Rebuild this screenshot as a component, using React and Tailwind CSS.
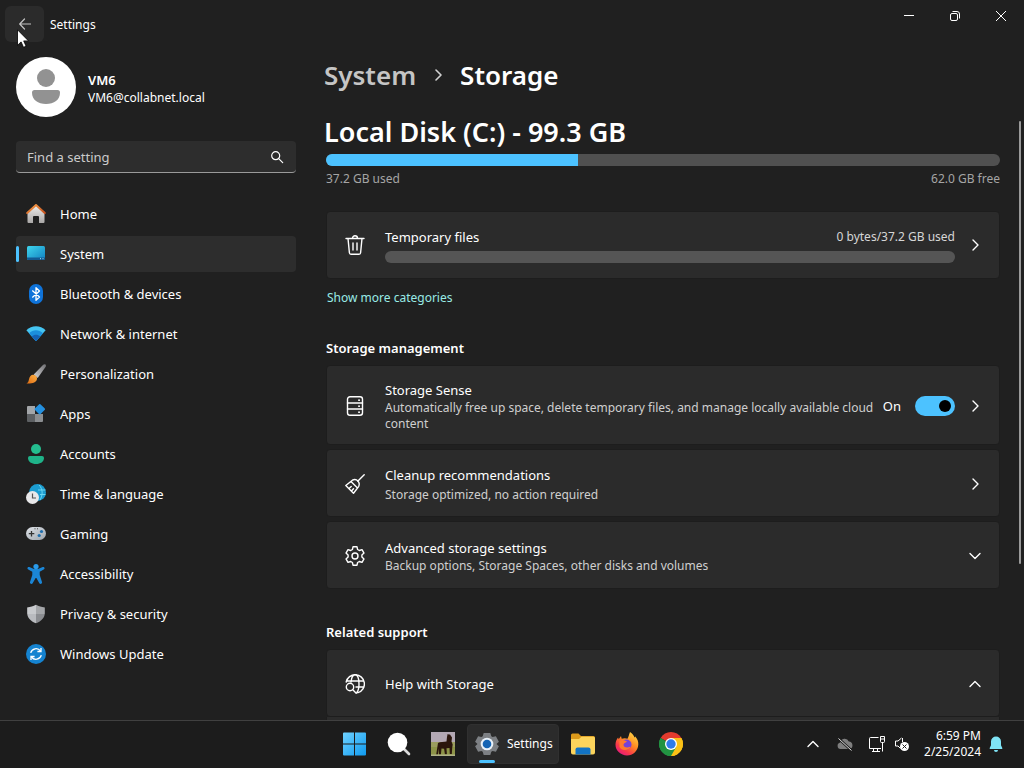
import { useState } from "react"
import clsx from "clsx"

const HomeIcon = () => (
  <svg viewBox="0 0 20 20" className="size-5">
    <defs>
      <linearGradient id="homeWall" x1="0" y1="0" x2="0" y2="1">
        <stop offset="0" stopColor="#f1efee" />
        <stop offset="1" stopColor="#a9a7a6" />
      </linearGradient>
      <linearGradient id="homeRoof" x1="0" y1="0" x2="1" y2="1">
        <stop offset="0" stopColor="#f7a04a" />
        <stop offset="1" stopColor="#c8501c" />
      </linearGradient>
    </defs>
    <path d="M1.500 8 10 .8 18.500 8v10a1 1 0 0 1-1 1H13v-6a1 1 0 0 0-1-1H8a1 1 0 0 0-1 1v6H2.500a1 1 0 0 1-1-1z" fill="url(#homeWall)" />
    <path d="M1.200 9 10 1l8.800 8" fill="none" stroke="url(#homeRoof)" strokeWidth="2" strokeLinecap="round" strokeLinejoin="round" />
  </svg>
)

const SystemIcon = () => (
  <svg viewBox="0 0 20 20" className="size-5">
    <defs>
      <linearGradient id="screen" x1="0" y1="0" x2="1" y2="1">
        <stop offset="0" stopColor="#3fd6ee" />
        <stop offset="1" stopColor="#1180c0" />
      </linearGradient>
    </defs>
    <rect x="1" y="2" width="18" height="14" rx="1.500" fill="url(#screen)" />
    <path d="M1 13.500h18v1a1.500 1.500 0 0 1-1.500 1.500h-15A1.500 1.500 0 0 1 1 14.500z" fill="#125a93" />
    <path d="M14 14.700h1M16.500 14.700h1" stroke="#9fe2f7" strokeWidth="1" />
  </svg>
)

const BluetoothIcon = () => (
  <svg viewBox="0 0 20 20" className="size-5">
    <rect x="3" y="0" width="14" height="20" rx="7" fill="#0f73d9" />
    <path d="m6.300 6.500 7.200 6.600L10 16.300V3.700l3.500 3.200-7.200 6.600" fill="none" stroke="#fff" strokeWidth="1.300" strokeLinejoin="round" />
  </svg>
)

const NetworkIcon = () => (
  <svg viewBox="0 0 20 20" className="size-5">
    <path d="M.4 6.200C5.500.800 14.500.800 19.600 6.200L10.700 16.400a1 1 0 0 1-1.400 0z" fill="#45c5f2" />
    <path d="M3 9.300c3.900-4 10.100-4 14 0l-6.300 7.100a1 1 0 0 1-1.400 0z" fill="#1b8fdc" />
    <path d="M5.800 12.500c2.400-2.300 6-2.300 8.400 0l-3.500 3.900a1 1 0 0 1-1.400 0z" fill="#1462b5" />
  </svg>
)

const BrushIcon = () => (
  <svg viewBox="0 0 20 20" className="size-5">
    <defs>
      <linearGradient id="handle" x1="1" y1="0" x2="0" y2="1">
        <stop offset="0" stopColor="#6d6d70" />
        <stop offset="1" stopColor="#d5d5d8" />
      </linearGradient>
      <linearGradient id="bristle" x1="1" y1="0" x2="0" y2="1">
        <stop offset="0" stopColor="#ffb347" />
        <stop offset="1" stopColor="#dd6a12" />
      </linearGradient>
    </defs>
    <path d="M19.500.6c.7.700.5 1.700 0 2.500l-7.800 11-4-3.600L17.200.8c.7-.6 1.700-.8 2.300-.2z" fill="url(#handle)" />
    <path d="M7.300 10.800c2.600.3 4 2.200 3.700 4.200-.4 3.300-4.700 4.800-10.600 4.500 1.900-1 2.200-2.500 2.600-4.300.5-2.600 2.200-4.600 4.300-4.400z" fill="url(#bristle)" />
  </svg>
)

const AppsIcon = () => (
  <svg viewBox="0 0 20 20" className="size-5">
    <path d="M1 3a1 1 0 0 1 1-1h7v8H1z" fill="#a3a6a9" />
    <path d="M1 10h8v8H2a1 1 0 0 1-1-1z" fill="#5d6063" />
    <path d="M9 10h8v7a1 1 0 0 1-1 1H9z" fill="#8b8e91" />
    <rect x="9.800" y="1.200" width="8" height="8" rx="1.200" transform="rotate(45 13.800 5.200)" fill="#2490df" />
  </svg>
)

const AccountsIcon = () => (
  <svg viewBox="0 0 20 20" className="size-5">
    <circle cx="10" cy="5" r="5" fill="#24bd8f" />
    <path d="M4 12h12a2 2 0 0 1 2 2c0 3.800-3.500 6-8 6s-8-2.200-8-6a2 2 0 0 1 2-2z" fill="#1fb389" />
  </svg>
)

const TimeIcon = () => (
  <svg viewBox="0 0 20 20" className="size-5">
    <circle cx="11.500" cy="8.500" r="8.500" fill="#1b9cd0" />
    <path d="M13 1c4 4 4 10 1 15M12 6h7.500M14 10.500h5.500" fill="none" stroke="#6ad6f2" strokeWidth="1" />
    <circle cx="6.500" cy="13.500" r="6.500" fill="#e8e8ea" />
    <path d="M6.500 9.500v4.500H10" fill="none" stroke="#555" strokeWidth="1.200" />
  </svg>
)

const GamingIcon = () => (
  <svg viewBox="0 0 20 20" className="size-5">
    <defs>
      <linearGradient id="pad" x1="0" y1="0" x2="1" y2="1">
        <stop offset="0" stopColor="#dfe3e8" />
        <stop offset="1" stopColor="#9da5ad" />
      </linearGradient>
    </defs>
    <rect x="0" y="3" width="20" height="13" rx="6.500" fill="url(#pad)" />
    <path d="M5.500 7v5.500M2.800 9.700h5.500" stroke="#333" strokeWidth="1.300" />
    <circle cx="15.500" cy="7.500" r="1.600" fill="#1f6fae" />
    <circle cx="13.200" cy="11.500" r="1.600" fill="#1f6fae" />
    <path d="M8.500 4.800h1M11 4.800h1" stroke="#444" />
  </svg>
)

const AccessibilityIcon = () => (
  <svg viewBox="0 0 20 20" className="size-5">
    <path d="M3.300 3.100 8 5h4l4.700-1.900c1.800-.6 2.600 1.600 1 2.400L13.700 7.800V11l2.300 7c.5 1.900-2 2.700-2.800 1L10.400 14h-.8l-2.800 5c-.8 1.700-3.300.9-2.800-1l2.300-7V7.800L2.300 5.500c-1.600-.8-.8-3 1-2.400z" fill="#1b86d6" />
    <circle cx="10" cy="2.600" r="2.600" fill="#2a9bea" />
  </svg>
)

const PrivacyIcon = () => (
  <svg viewBox="0 0 20 20" className="size-5">
    <path d="M10 .8c2.600 1.700 5.400 2.400 8.800 2.600v5.500c0 4.700-3.300 8-8.800 10.300z" fill="#8b8d91" />
    <path d="M10 .8C7.400 2.500 4.600 3.200 1.200 3.400v5.500c0 4.700 3.300 8 8.800 10.300z" fill="#b9bbbf" />
    <path d="M10 .8c2.600 1.700 5.400 2.400 8.800 2.600V10H1.200V3.400C4.600 3.200 7.400 2.500 10 .8z" fill="#fff" opacity=".22" />
  </svg>
)

const UpdateIcon = () => (
  <svg viewBox="0 0 20 20" className="size-5">
    <circle cx="10" cy="10" r="10" fill="#1583d0" />
    <path d="M4.700 8.800A5.500 5.500 0 0 1 14.500 7M15.300 11.200A5.500 5.500 0 0 1 5.500 13" fill="none" stroke="#fff" strokeWidth="1.300" />
    <path d="M15 4v3.500h-3.600M5 16v-3.500h3.600" fill="none" stroke="#fff" strokeWidth="1.300" />
  </svg>
)

const navItems = [
  { label: "Home", icon: HomeIcon },
  { label: "System", icon: SystemIcon },
  { label: "Bluetooth & devices", icon: BluetoothIcon },
  { label: "Network & internet", icon: NetworkIcon },
  { label: "Personalization", icon: BrushIcon },
  { label: "Apps", icon: AppsIcon },
  { label: "Accounts", icon: AccountsIcon },
  { label: "Time & language", icon: TimeIcon },
  { label: "Gaming", icon: GamingIcon },
  { label: "Accessibility", icon: AccessibilityIcon },
  { label: "Privacy & security", icon: PrivacyIcon },
  { label: "Windows Update", icon: UpdateIcon },
]

const arrows = {
  right: "m4 1 5 5-5 5",
  down: "m1 3.500 5 5 5-5",
  up: "m1 8.500 5-5 5 5",
}

function Chevron({ dir = "right" }) {
  return (
    <svg viewBox="0 0 12 12" className="size-3 shrink-0" fill="none" stroke="#fff" strokeWidth="1.400" strokeLinecap="round" strokeLinejoin="round">
      <path d={arrows[dir]} />
    </svg>
  )
}

function LineIcon({ children }) {
  return (
    <svg viewBox="0 0 20 20" className="size-5 shrink-0" fill="none" stroke="#fff" strokeWidth="1.400" strokeLinecap="round" strokeLinejoin="round">
      {children}
    </svg>
  )
}

const TrashIcon = () => (
  <LineIcon>
    <path d="M1 3.500h18M7.500 3.300a2.500 2.500 0 0 1 5 0M3 3.500l1.400 14.200a1.600 1.600 0 0 0 1.600 1.500h8a1.600 1.600 0 0 0 1.600-1.500L17 3.500M8 8v7M12 8v7" />
  </LineIcon>
)

const DriveIcon = () => (
  <LineIcon>
    <rect x="2.500" y=".8" width="15" height="18.400" rx="2.500" />
    <path d="M2.500 7h15M2.500 13h15" />
    <path d="M14 4.200h.1M14 10.200h.1M14 16.200h.1" strokeWidth="1.800" />
  </LineIcon>
)

const BroomIcon = () => (
  <LineIcon>
    <path d="m19.200.8-6.500 6.500M7.400 6.200c2-1 4.200-.6 5.500.8s1.700 3.600.7 5.600l-5.100 6.600L.8 11.500zM6 7.500l6.500 6.500M4 14.500l2.200-2M6.500 17l2-2.200" />
  </LineIcon>
)

const GearIcon = () => (
  <LineIcon>
    <path d="M8 .8h4l.6 2.700 1.700 1 2.700-.9 2 3.500-2.100 1.900v2l2.100 1.900-2 3.500-2.700-.9-1.700 1-.6 2.700H8l-.6-2.700-1.700-1-2.700.9-2-3.500L3.100 11V9L1 7.100l2-3.500 2.700.9 1.700-1z" />
    <circle cx="10" cy="10" r="3" />
  </LineIcon>
)

const GlobeSearchIcon = () => (
  <LineIcon>
    <path d="M1.200 8A9.200 9.200 0 1 1 13 18.700M1.500 7h17M11 13h7.500M6 8C6.500 3.500 8 .8 10 .8c2.500 0 4 4.200 4 9.200 0 4-.8 7-2.200 8.500" />
    <circle cx="5" cy="13" r="3.700" />
    <path d="m7.800 15.800 3.400 3.400" />
  </LineIcon>
)

function Card({ icon: Icon, title, desc, arrow, roomy }) {
  return (
    <button
      type="button"
      className="flex h-[68px] w-full items-center gap-5 rounded border border-[#1d1d1d] bg-[#2b2b2b] px-[18px] pt-[2px] text-left hover:bg-[#323232]"
    >
      <Icon />
      <span className={clsx("flex min-w-0 flex-1 flex-col", roomy && "gap-[2px]")}>
        <span className="text-[13px] leading-5">{title}</span>
        {desc && <span className="text-xs leading-4 text-[#cfcfcf]">{desc}</span>}
      </span>
      <Chevron dir={arrow} />
    </button>
  )
}

function TitleBar() {
  return (
    <header className="flex h-12 items-start">
      <button type="button" aria-label="Back" className="mt-[6px] ml-[5px] flex h-9 w-[39px] items-center justify-center rounded-md bg-[#2b2b2b]">
        <svg viewBox="0 0 12 12" className="size-3" fill="none" stroke="#c4c4c4" strokeWidth="1.200" strokeLinecap="round" strokeLinejoin="round">
          <path d="M11.500 6H.7M5.500 1 .7 6l4.800 5" />
        </svg>
      </button>
      <span className="mt-[7px] ml-[6px] text-xs leading-9">Settings</span>
      <div className="ml-auto flex">
        <button type="button" aria-label="Minimize" className="flex h-8 w-[46px] items-center justify-center">
          <svg viewBox="0 0 12 12" className="size-3" stroke="#fff"><path d="M1 5.500h10" /></svg>
        </button>
        <button type="button" aria-label="Restore" className="flex h-8 w-[46px] items-center justify-center">
          <svg viewBox="0 0 12 12" className="size-3" fill="none" stroke="#fff">
            <rect x="1.500" y="3.500" width="7" height="7" rx="1.500" />
            <path d="M3.500 1.500H8A2.500 2.500 0 0 1 10.500 4v4.500" />
          </svg>
        </button>
        <button type="button" aria-label="Close" className="flex h-8 w-[46px] items-center justify-center">
          <svg viewBox="0 0 12 12" className="size-3" stroke="#fff"><path d="m1 1 10 10M11 1 1 11" /></svg>
        </button>
      </div>
    </header>
  )
}

function Sidebar() {
  const [active, setActive] = useState("System")

  return (
    <aside className="w-[312px] shrink-0 px-4 pt-[9px]">
      <div className="flex items-center gap-3">
        <svg viewBox="0 0 60 60" className="size-[60px]">
          <circle cx="30" cy="30" r="30" fill="#fff" />
          <circle cx="30" cy="21" r="9" fill="#929292" />
          <path d="M18.500 33h23a2.500 2.500 0 0 1 2.500 2.500C44 43 38 47 30 47s-14-4-14-11.500a2.500 2.500 0 0 1 2.500-2.500z" fill="#929292" />
        </svg>
        <div className="pt-[2px]">
          <p className="text-[13px] leading-5 font-semibold">VM6</p>
          <p className="text-xs leading-4">VM6@collabnet.local</p>
        </div>
      </div>
      <div className="mt-6 flex h-8 items-center rounded border-b border-[#9a9a9a] bg-[#2d2d2d] pr-3 pl-[11px]">
        <input
          type="search"
          aria-label="Find a setting"
          placeholder="Find a setting"
          className="min-w-0 flex-1 bg-transparent text-[13px] leading-5 outline-none placeholder:text-[#cbcbcb]"
        />
        <svg viewBox="0 0 14 14" className="size-[14px]" fill="none" stroke="#fff" strokeWidth="1.200" strokeLinecap="round">
          <circle cx="5.700" cy="5.700" r="4" />
          <path d="m8.700 8.700 4 4" />
        </svg>
      </div>
      <nav className="mt-[23px] flex flex-col gap-1">
        {navItems.map(({ label, icon: Icon }) => (
          <a
            key={label}
            href="#"
            onClick={() => setActive(label)}
            className={clsx(
              "relative flex h-9 items-center gap-[14px] rounded px-[10px] text-[13px] leading-5",
              active === label ? "bg-[#2d2d2d]" : "hover:bg-[#282828]"
            )}
          >
            {active === label && <span className="absolute top-[10px] left-0 h-4 w-[3px] rounded-full bg-[#4cc2ff]" />}
            <Icon />
            {label}
          </a>
        ))}
      </nav>
    </aside>
  )
}

function StoragePage() {
  const [sense, setSense] = useState(true)
  const used = 37.2
  const total = 99.3

  return (
    <main className="flex min-h-0 min-w-0 flex-1 flex-col pl-3">
      <div className="flex h-14 shrink-0 items-center pb-[2px] text-[26px] leading-10 font-semibold">
        <a href="#" className="text-[#c5c5c5]">System</a>
        <svg viewBox="0 0 12 12" className="mx-4 size-3" fill="none" stroke="#d0d0d0" strokeWidth="1.600" strokeLinecap="round" strokeLinejoin="round">
          <path d="m4 1 5 5-5 5" />
        </svg>
        <h1>Storage</h1>
      </div>
      <div className="flex min-h-0 flex-1">
        <div className="min-w-0 flex-1 overflow-hidden pt-2">
          <h2 className="text-[27px] leading-10 font-semibold">Local Disk (C:) - 99.3 GB</h2>
          <div className="pl-[2px]">
            <div className="mt-[2px] h-3 overflow-hidden rounded-full bg-[#505050]">
              <div className="h-full bg-[#4cc2ff]" style={{ width: `${(used / total) * 100}%` }} />
            </div>
            <div className="mt-[5px] flex justify-between text-xs leading-4 text-[#a5a5a5]">
              <span>37.2 GB used</span>
              <span>62.0 GB free</span>
            </div>

            <button type="button" className="mt-6 flex h-[68px] w-full items-center gap-5 rounded border border-[#1d1d1d] bg-[#2b2b2b] px-[18px] text-left">
              <TrashIcon />
              <span className="-mr-[6px] flex flex-1 flex-col gap-1">
                <span className="flex items-center justify-between text-[13px] leading-5">
                  Temporary files
                  <span className="text-xs leading-4 text-[#d6d6d6]">0 bytes/37.2 GB used</span>
                </span>
                <span className="h-3 rounded-full bg-[#555]" />
              </span>
              <Chevron />
            </button>
            <a href="#" className="mt-[9px] block pl-px text-xs leading-5 text-[#99ebe6]">Show more categories</a>

            <h3 className="mt-[30px] text-[13px] leading-5 font-semibold">Storage management</h3>
            <div className="mt-[7px] flex flex-col gap-1">
              <div className="flex h-20 items-center gap-2 rounded border border-[#1d1d1d] bg-[#2b2b2b] px-[18px] pt-[2px]">
                <div className="flex min-w-0 flex-1 items-center gap-5">
                  <DriveIcon />
                  <div className="min-w-0 flex-1">
                    <p className="text-[13px] leading-5">Storage Sense</p>
                    <p className="text-xs leading-4 text-[#cfcfcf]">
                      Automatically free up space, delete temporary files, and manage locally available cloud content
                    </p>
                  </div>
                </div>
                <div className="flex items-center gap-[14px]">
                  <label htmlFor="sense" className="text-[13px] leading-5">{sense ? "On" : "Off"}</label>
                  <input
                    id="sense"
                    type="checkbox"
                    role="switch"
                    checked={sense}
                    onChange={(e) => setSense(e.target.checked)}
                    className="flex h-5 w-10 appearance-none items-center rounded-full bg-[#555] px-1 before:size-3 before:rounded-full before:bg-black before:content-[''] checked:justify-end checked:bg-[#4cc2ff]"
                  />
                  <button type="button" aria-label="Open Storage Sense"><Chevron /></button>
                </div>
              </div>
              <Card icon={BroomIcon} title="Cleanup recommendations" desc="Storage optimized, no action required" roomy />
              <Card icon={GearIcon} title="Advanced storage settings" desc="Backup options, Storage Spaces, other disks and volumes" arrow="down" />
            </div>

            <h3 className="mt-[33px] text-[13px] leading-5 font-semibold">Related support</h3>
            <div className="mt-[7px] flex flex-col">
              <Card icon={GlobeSearchIcon} title="Help with Storage" arrow="up" />
              <div className="h-12 border-x border-[#1d1d1d] bg-[#2b2b2b]" />
            </div>
          </div>
        </div>
        <div className="w-6 shrink-0 pt-[17px] pl-[19px]">
          <div className="h-[74%] w-[2px] rounded-full bg-[#9a9a9a]" />
        </div>
      </div>
    </main>
  )
}

const StartIcon = () => (
  <svg viewBox="0 0 24 24" className="size-6">
    <defs>
      <linearGradient id="win" x1="0" y1="0" x2="1" y2="1">
        <stop offset="0" stopColor="#6fd2ff" />
        <stop offset="1" stopColor="#0f9af0" />
      </linearGradient>
    </defs>
    <path d="M0 1.500a1 1 0 0 1 1-1h10v11H0zM12 .5h10a1 1 0 0 1 1 1v10H12zM0 12.500h11v11H1a1 1 0 0 1-1-1zM12 12.500h11v10a1 1 0 0 1-1 1H12z" fill="url(#win)" />
  </svg>
)

const TaskSearchIcon = () => (
  <svg viewBox="0 0 24 24" className="size-6">
    <path d="m17 17 5 5" stroke="#dadada" strokeWidth="2.600" strokeLinecap="round" />
    <circle cx="10.500" cy="10.500" r="9.800" fill="#fff" />
  </svg>
)

const HorseIcon = () => (
  <svg viewBox="0 0 24 24" className="size-6">
    <path d="M0 0h24v24H0z" fill="#8d9448" />
    <path d="M0 0h24v11H0z" fill="#b3a8b4" />
    <path d="M0 10h24v5H0z" fill="#9b9d5f" />
    <path d="M7 11c2-1.500 6-1 8.500-1.500L16 5l.6-3 1.200.6L19 2.400l2 3.200-.5 3.900 1.200 3-.5 3.500-.4 6h-2l-.3-6-3 .3.400 6h-2l-.8-5.500-2.600-.2-.6 6H8v-6l-1 6H5.200z" fill="#2b160d" />
    <path d="M0 22.500h24V24H0z" fill="#b0b288" />
  </svg>
)

const SettingsIcon = () => (
  <svg viewBox="0 0 24 24" className="size-6 shrink-0">
    <path d="M8.700 1h6.600l1 3.300 1.300.8 3.300-.8 3 5.500-2.400 2.200 2.400 2.300-3 5.400-3.300-.8-1.300.8-1 3.300H8.700l-1-3.300-1.300-.8-3.300.8-3-5.400L2.500 12 .1 9.800l3-5.500 3.300.8 1.300-.8z" fill="#7d8084" />
    <circle cx="12" cy="12" r="6.300" fill="#e9f1f8" />
    <circle cx="12" cy="12" r="4.300" fill="#1464b4" />
  </svg>
)

const FolderIcon = () => (
  <svg viewBox="0 0 24 24" className="size-6">
    <path d="M0 3a1.500 1.500 0 0 1 1.500-1.500h6L10 4h12.500A1.500 1.500 0 0 1 24 5.500V12H0z" fill="#dc9a1b" />
    <path d="M0 7h8l2.500-2.300H22.500A1.500 1.500 0 0 1 24 6.200v14.300a2 2 0 0 1-2 2H2a2 2 0 0 1-2-2z" fill="#fcd45c" />
    <path d="M4.500 22.500v-5a2 2 0 0 1 2-2h11a2 2 0 0 1 2 2v5z" fill="#1273c4" />
  </svg>
)

const FirefoxIcon = () => (
  <svg viewBox="0 0 24 24" className="size-6">
    <defs>
      <linearGradient id="fox" x1=".9" y1="0" x2=".2" y2="1">
        <stop offset="0" stopColor="#ffe14a" />
        <stop offset=".45" stopColor="#ff8a22" />
        <stop offset=".75" stopColor="#f8384a" />
        <stop offset="1" stopColor="#e31587" />
      </linearGradient>
    </defs>
    <path d="M15 0c3 2 4 4 4.500 5.500.5-.2.600-.8.500-1.300 2.500 2.500 3.500 5.500 3.300 8.500-.4 6-5.200 10.800-11.300 10.800S.5 18.700.5 12.800c0-3 1-5.500 2.600-7.300l.6 1.800L6 4l.7 2.800C8.500 6 11 6 12.500 6.800 13.500 5 14 2.500 15 0z" fill="url(#fox)" />
    <circle cx="11.500" cy="12.500" r="5" fill="#7542d8" />
    <path d="M4.500 9c3-2 5.500-.5 7.500.5-.8 1.500-3 1-3.500 3-.3 3 4 4 7 2-1 4-9 5-11 .5z" fill="#ff7a2d" />
  </svg>
)

const ChromeIcon = () => (
  <svg viewBox="0 0 24 24" className="size-6">
    <path d="M12 12 1.610 6A12 12 0 0 1 22.390 6z" fill="#e33b2e" />
    <path d="M12 12 22.390 6A12 12 0 0 1 12 24z" fill="#fbc116" />
    <path d="M12 12v12A12 12 0 0 1 1.610 6z" fill="#229342" />
    <path d="M12 6h10.390A12 12 0 0 1 12 24l5.200-9z" fill="#fbc116" />
    <path d="M1.610 6 6.800 15l5.200 3 5.200-3L12 24A12 12 0 0 1 1.610 6z" fill="#229342" />
    <circle cx="12" cy="12" r="6" fill="#fff" />
    <circle cx="12" cy="12" r="4.700" fill="#2f7bea" />
  </svg>
)

const pinned = [
  { name: "Start", icon: StartIcon },
  { name: "Search", icon: TaskSearchIcon },
  { name: "Horse", icon: HorseIcon },
]

const apps = [
  { name: "File Explorer", icon: FolderIcon },
  { name: "Firefox", icon: FirefoxIcon },
  { name: "Chrome", icon: ChromeIcon },
]

function TaskButton({ name, icon: Icon }) {
  return (
    <button type="button" aria-label={name} className="flex h-10 w-11 items-center justify-center rounded">
      <Icon />
    </button>
  )
}

function Taskbar() {
  return (
    <footer className="grid h-12 shrink-0 grid-cols-[1fr_auto_1fr] items-center border-t border-[#404040] bg-[#1c1c1c] pb-px pl-[2px]">
      <div />
      <div className="flex items-center">
        {pinned.map((p) => <TaskButton key={p.name} {...p} />)}
        <button type="button" className="relative mx-[2px] flex h-10 w-[92px] items-center gap-2 rounded border border-[#303030] bg-[#2b2b2b] pl-[7px] text-xs leading-4">
          <SettingsIcon />
          Settings
          <span className="absolute bottom-0 left-[11px] h-[3px] w-4 rounded-full bg-[#4cc2ff]" />
        </button>
        {apps.map((p) => <TaskButton key={p.name} {...p} />)}
      </div>
      <div className="flex items-center justify-end pr-5">
        <button type="button" aria-label="Show hidden icons" className="flex w-8 justify-center"><Chevron dir="up" /></button>
        <button type="button" aria-label="OneDrive" className="flex w-8 justify-center">
          <svg viewBox="0 0 16 16" className="size-4">
            <path d="M3.500 13a3.300 3.300 0 0 1-.3-6.500A4.500 4.500 0 0 1 11.800 5.500 3.800 3.800 0 0 1 12.500 13z" fill="#7e7e7e" />
            <path d="m1.500 2.500 13 12" stroke="#1c1c1c" strokeWidth="2.400" />
            <path d="m1.500 2.500 13 12" stroke="#e0e0e0" strokeWidth="1" />
          </svg>
        </button>
        <button type="button" aria-label="Network" className="flex w-8 justify-center">
          <svg viewBox="0 0 18 18" className="size-[18px]" fill="none" stroke="#fff">
            <path d="M10.500 2.500H2.500a1 1 0 0 0-1 1v10h11.500M5.500 13.500v3M9.500 13.500v3M4 16.500h8" />
            <path d="M12.500 1.500h4v5a1 1 0 0 1-1 1h-2a1 1 0 0 1-1-1zM14.500 7.500v9M12.500 4h4" />
          </svg>
        </button>
        <button type="button" aria-label="Volume" className="flex w-[18px] justify-center">
          <svg viewBox="0 0 16 16" className="size-4" fill="none" stroke="#fff">
            <path d="M7.500 2 4 5H1.500v5H4l2.500 2.500M8.500 2v4" />
            <circle cx="10.500" cy="10.500" r="4.500" fill="#fff" stroke="none" />
            <path d="m8.500 8.500 4 4M12.500 8.500l-4 4" stroke="#1c1c1c" />
          </svg>
        </button>
        <button type="button" className="ml-2 w-[62px] text-right text-xs leading-4">
          <span className="block">6:59 PM</span>
          <span className="block">2/25/2024</span>
        </button>
        <button type="button" aria-label="Notifications" className="ml-[7px]">
          <svg viewBox="0 0 16 16" className="size-4" fill="#7fe3f5">
            <path d="M8 .5a5 5 0 0 1 5 5v3.800l1.300 2.700c.2.500-.1 1-.6 1H2.300c-.5 0-.8-.5-.6-1L3 9.300V5.500a5 5 0 0 1 5-5zM6 14h4a2 2 0 0 1-4 0z" />
          </svg>
        </button>
      </div>
    </footer>
  )
}

export default function App() {
  return (
    <div className="relative flex h-screen flex-col overflow-hidden bg-[#202020] font-['Noto_Sans',sans-serif] text-white">
      <TitleBar />
      <div className="flex min-h-0 flex-1">
        <Sidebar />
        <StoragePage />
      </div>
      <Taskbar />
      {/* mouse pointer */}
      <svg viewBox="0 0 12 19" className="pointer-events-none absolute top-[29px] left-[17px] h-[19px] w-3">
        <path d="M.5.800v15.500l3.600-3.400 2.400 5.400 2.600-1.100-2.400-5.300h4.800z" fill="#fff" stroke="#000" strokeWidth=".8" />
      </svg>
    </div>
  )
}
